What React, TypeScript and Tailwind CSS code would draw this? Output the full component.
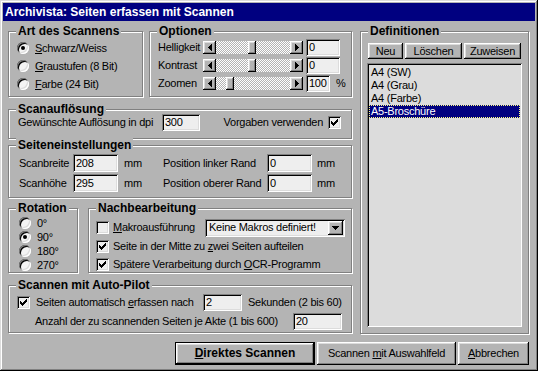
import React from 'react';

const raised =
  'shadow-[inset_-1px_-1px_0_#000,inset_1px_1px_0_#fff,inset_-2px_-2px_0_#808080,inset_2px_2px_0_#dcdcdc]';
const sunken =
  'shadow-[inset_1px_1px_0_#808080,inset_-1px_-1px_0_#fff,inset_2px_2px_0_#000,inset_-2px_-2px_0_#dcdcdc]';

function Group({ title, className = '', children }: { title: string; className?: string; children?: React.ReactNode }) {
  return (
    <div className={`border border-[#808080] shadow-[inset_1px_1px_0_#fff,1px_1px_0_#fff] ${className}`}>
      <div className="-mt-[8px] -mb-[6px] ml-[7px] w-fit bg-[#b4b4b4] px-[2px] text-[12px] font-bold leading-[14px] tracking-normal">
        {title}
      </div>
      {children}
    </div>
  );
}

function Radio({ on = false }: { on?: boolean }) {
  return (
    <span className="flex h-[12px] w-[12px] shrink-0 items-center justify-center rounded-full bg-[#f4f4f4] shadow-[inset_1px_1px_0_#808080,inset_-1px_-1px_0_#fff,inset_2px_2px_0_#000,inset_-2px_-2px_0_#dcdcdc]">
      {on && <span className="h-[4px] w-[4px] rounded-full bg-black" />}
    </span>
  );
}

function Check({ on = false }: { on?: boolean }) {
  return (
    <span className={`flex h-[13px] w-[13px] shrink-0 items-center justify-center bg-[#eeeeee] ${sunken}`}>
      {on && (
        <svg width="7" height="7" viewBox="0 0 7 7" shapeRendering="crispEdges">
          <rect x="6" y="0" width="1" height="1" />
          <rect x="5" y="1" width="2" height="1" />
          <rect x="0" y="2" width="1" height="1" />
          <rect x="4" y="2" width="3" height="1" />
          <rect x="0" y="3" width="2" height="1" />
          <rect x="3" y="3" width="3" height="1" />
          <rect x="0" y="4" width="5" height="1" />
          <rect x="1" y="5" width="3" height="1" />
          <rect x="2" y="6" width="1" height="1" />
        </svg>
      )}
    </span>
  );
}

function TextBox({ value, className = '' }: { value: string; className?: string }) {
  return (
    <div className={`flex h-[17px] shrink-0 items-center bg-[#eeeeee] pl-[3px] ${sunken} ${className}`}>{value}</div>
  );
}

function Arrow({ dir }: { dir: 'left' | 'right' | 'down' }) {
  if (dir === 'down') {
    return (
      <svg width="7" height="4" viewBox="0 0 7 4" shapeRendering="crispEdges">
        <rect x="0" y="0" width="7" height="1" />
        <rect x="1" y="1" width="5" height="1" />
        <rect x="2" y="2" width="3" height="1" />
        <rect x="3" y="3" width="1" height="1" />
      </svg>
    );
  }
  return (
    <svg width="4" height="7" viewBox="0 0 4 7" shapeRendering="crispEdges">
      {dir === 'left' ? (
        <>
          <rect x="0" y="3" width="1" height="1" />
          <rect x="1" y="2" width="1" height="3" />
          <rect x="2" y="1" width="1" height="5" />
          <rect x="3" y="0" width="1" height="7" />
        </>
      ) : (
        <>
          <rect x="0" y="0" width="1" height="7" />
          <rect x="1" y="1" width="1" height="5" />
          <rect x="2" y="2" width="1" height="3" />
          <rect x="3" y="3" width="1" height="1" />
        </>
      )}
    </svg>
  );
}

function Slider({ thumb }: { thumb: number }) {
  return (
    <div className="flex h-[13px] w-[100px] shrink-0">
      <div className={`flex w-[13px] items-center justify-center bg-[#b4b4b4] ${raised}`}>
        <Arrow dir="left" />
      </div>
      <div className="relative flex-1 bg-[image:repeating-conic-gradient(#fff_0_25%,#b4b4b4_0_50%)] bg-[length:2px_2px]">
        <div className={`absolute top-0 h-full w-[8px] bg-[#b4b4b4] ${raised}`} style={{ left: thumb }} />
      </div>
      <div className={`flex w-[13px] items-center justify-center bg-[#b4b4b4] ${raised}`}>
        <Arrow dir="right" />
      </div>
    </div>
  );
}

function Btn({ children, className = '' }: { children: React.ReactNode; className?: string }) {
  return (
    <div className={`flex shrink-0 items-center justify-center bg-[#b4b4b4] ${raised} ${className}`}>{children}</div>
  );
}

const definitions = ['A4 (SW)', 'A4 (Grau)', 'A4 (Farbe)', 'A5-Broschüre'];

export default function App() {
  return (
    <div className="flex h-[371px] w-[538px] flex-col bg-[#b4b4b4] p-[3px] font-['Liberation_Sans',Arial,sans-serif] text-[11px] leading-[13px] tracking-[-0.25px] text-black shadow-[inset_-1px_-1px_0_#000,inset_1px_1px_0_#dcdcdc,inset_-2px_-2px_0_#808080,inset_2px_2px_0_#fff]">
      <div className="flex h-[18px] shrink-0 items-center bg-[#000080] pl-[2px] text-[12px] font-bold tracking-normal text-white">
        Archivista: Seiten erfassen mit Scannen
      </div>

      <div className="flex pl-[5px] pt-[10px]">
        <div className="flex w-[344px] flex-col">
          <div className="flex h-[66px] gap-[6px]">
            <Group title="Art des Scannens" className="w-[135px]">
              <div className="flex flex-col pl-[8px] pt-[7px]">
                <div className="flex h-[18px] items-center gap-[6px]">
                  <Radio on />
                  <span><u>S</u>chwarz/Weiss</span>
                </div>
                <div className="flex h-[18px] items-center gap-[6px]">
                  <Radio />
                  <span><u>G</u>raustufen (8 Bit)</span>
                </div>
                <div className="flex h-[18px] items-center gap-[6px]">
                  <Radio />
                  <span><u>F</u>arbe (24 Bit)</span>
                </div>
              </div>
            </Group>
            <Group title="Optionen" className="w-[203px]">
              <div className="flex flex-col pl-[8px] pt-[6px]">
                <div className="flex h-[18px] items-center">
                  <span className="w-[45px]">Helligkeit</span>
                  <Slider thumb={32} />
                  <TextBox value="0" className="ml-[3px] w-[34px]" />
                </div>
                <div className="flex h-[18px] items-center">
                  <span className="w-[45px]">Kontrast</span>
                  <Slider thumb={32} />
                  <TextBox value="0" className="ml-[3px] w-[34px]" />
                </div>
                <div className="flex h-[18px] items-center">
                  <span className="w-[45px]">Zoomen</span>
                  <Slider thumb={10} />
                  <TextBox value="100" className="ml-[3px] w-[24px]" />
                  <span className="ml-[6px]">%</span>
                </div>
              </div>
            </Group>
          </div>

          <Group title="Scanauflösung" className="mt-[12px] h-[30px]">
            <div className="mt-[3px] flex h-[18px] items-center pl-[9px] pr-[10px]">
              <span className="w-[144px]">Gewünschte Auflösung in dpi</span>
              <TextBox value="300" className="w-[38px]" />
              <div className="ml-auto flex items-center gap-[5px]">
                <span>Vorgaben verwenden</span>
                <Check on />
              </div>
            </div>
          </Group>

          <Group title="Seiteneinstellungen" className="mt-[6px] h-[53px]">
            <div className="flex flex-col pl-[10px] pt-[7px]">
              <div className="flex h-[20px] items-center">
                <span className="w-[54px]">Scanbreite</span>
                <TextBox value="208" className="h-[18px] w-[45px]" />
                <span className="ml-[6px] w-[39px]">mm</span>
                <span className="w-[104px]">Position linker Rand</span>
                <TextBox value="0" className="h-[18px] w-[45px]" />
                <span className="ml-[5px]">mm</span>
              </div>
              <div className="flex h-[20px] items-center">
                <span className="w-[54px]">Scanhöhe</span>
                <TextBox value="295" className="h-[18px] w-[45px]" />
                <span className="ml-[6px] w-[39px]">mm</span>
                <span className="w-[104px]">Position oberer Rand</span>
                <TextBox value="0" className="h-[18px] w-[45px]" />
                <span className="ml-[5px]">mm</span>
              </div>
            </div>
          </Group>

          <div className="mt-[10px] flex h-[65px] gap-[10px]">
            <Group title="Rotation" className="w-[70px]">
              <div className="flex flex-col pl-[10px] pt-[7px]">
                {['0°', '90°', '180°', '270°'].map((r) => (
                  <div key={r} className="flex h-[14px] items-center gap-[6px]">
                    <Radio on={r === '90°'} />
                    <span>{r}</span>
                  </div>
                ))}
              </div>
            </Group>
            <Group title="Nachbearbeitung" className="w-[264px]">
              <div className="flex flex-col pl-[7px] pt-[9px]">
                <div className="flex h-[19px] items-center">
                  <Check />
                  <span className="ml-[4px] w-[92px]"><u>M</u>akroausführung</span>
                  <div className={`flex h-[18px] w-[140px] items-center bg-[#eeeeee] pl-[4px] pr-[2px] ${sunken}`}>
                    <span className="flex-1">Keine Makros definiert!</span>
                    <Btn className="h-[14px] w-[15px]">
                      <Arrow dir="down" />
                    </Btn>
                  </div>
                </div>
                <div className="flex h-[18px] items-center">
                  <Check on />
                  <span className="ml-[4px]">Seite in der Mitte zu <u>z</u>wei Seiten aufteilen</span>
                </div>
                <div className="flex h-[18px] items-center">
                  <Check on />
                  <span className="ml-[4px]">Spätere Verarbeitung durch <u>O</u>CR-Programm</span>
                </div>
              </div>
            </Group>
          </div>

          <Group title="Scannen mit Auto-Pilot" className="mt-[12px] h-[48px]">
            <div className="flex flex-col pt-[7px]">
              <div className="flex h-[18px] items-center pl-[8px]">
                <Check on />
                <span className="ml-[6px] w-[167px]">Seiten automatisch <u>e</u>rfassen nach</span>
                <TextBox value="2" className="w-[39px]" />
                <span className="ml-[6px]">Sekunden (2 bis 60)</span>
              </div>
              <div className="flex h-[20px] items-center pl-[26px]">
                <span className="w-[258px]">Anzahl der zu scannenden Seiten je Akte (1 bis 600)</span>
                <TextBox value="20" className="w-[49px]" />
              </div>
            </div>
          </Group>
        </div>

        <Group title="Definitionen" className="ml-[8px] h-[303px] w-[169px]">
          <div className="flex flex-col pl-[6px] pt-[11px]">
            <div className="ml-[1px] flex gap-[2px]">
              <Btn className="h-[16px] w-[35px]">Neu</Btn>
              <Btn className="h-[16px] w-[57px]">Löschen</Btn>
              <Btn className="h-[16px] w-[57px]">Zuweisen</Btn>
            </div>
            <div className={`mt-[4px] flex h-[264px] w-[155px] flex-col bg-[#dcdcdc] p-[2px] pt-[3px] ${sunken}`}>
              {definitions.map((d, i) =>
                i === 3 ? (
                  <div
                    key={d}
                    className="flex h-[13px] items-center border border-dotted border-[#ffff80] bg-[#000080] pl-[1px] text-white"
                  >
                    {d}
                  </div>
                ) : (
                  <div key={d} className="flex h-[13px] items-center pl-[2px]">
                    {d}
                  </div>
                )
              )}
            </div>
          </div>
        </Group>
      </div>

      <div className="mt-[8px] flex justify-end gap-[2px] pr-[6px]">
        <div className="h-[23px] w-[140px] border border-black">
          <Btn className="h-full w-full text-[12px] font-bold tracking-normal">
            <span><u>D</u>irektes Scannen</span>
          </Btn>
        </div>
        <Btn className="h-[23px] w-[139px]">
          <span>Scannen <u>m</u>it Auswahlfeld</span>
        </Btn>
        <Btn className="h-[23px] w-[71px]">
          <span><u>A</u>bbrechen</span>
        </Btn>
      </div>
    </div>
  );
}
